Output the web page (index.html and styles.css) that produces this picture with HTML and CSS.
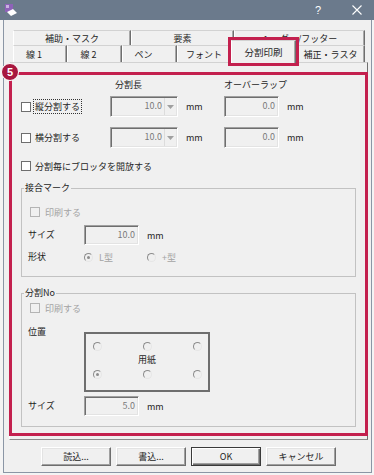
FILE: index.html
```html
<!DOCTYPE html>
<html>
<head>
    <meta charset="utf-8">
    <title>分割印刷</title>
    <link rel="stylesheet" href="styles.css">
</head>
<body>
    <div class="window">
        <div class="titlebar">
            <svg class="app-icon" viewBox="0 0 12 13" width="12" height="13">
                <rect x="0" y="0" width="8" height="8" fill="#8e62b8"/>
                <rect x="1" y="1" width="3" height="3" fill="#c9b3e0"/>
                <polygon points="2,8 8,5 12,9 6,12" fill="#ffffff"/>
            </svg>
            <span class="title-help">?</span>
            <svg class="title-close" viewBox="0 0 10 10" width="10" height="10">
                <path d="M0.5 0.5 L9.5 9.5 M9.5 0.5 L0.5 9.5" stroke="#ffffff" stroke-width="1.1"/>
            </svg>
        </div>

        <div class="client">
            <!-- tab strip, two rows -->
            <div class="tabs">
                <div class="tab-row row-back">
                    <div class="tab tab-mask">補助・マスク</div>
                    <div class="tab tab-elem">要素</div>
                    <div class="tab tab-header">ヘッダー/フッター</div>
                </div>
                <div class="tab-row row-front">
                    <div class="tab tab-line1 shift">線 1</div>
                    <div class="tab tab-line2 shift">線 2</div>
                    <div class="tab tab-pen shift">ペン</div>
                    <div class="tab tab-font">フォント</div>
                    <div class="tab tab-split active">分割印刷</div>
                    <div class="tab tab-raster">補正・ラスタ</div>
                </div>
            </div>

            <div class="panel">
                <div class="highlight">
                    <span class="badge">5</span>

                    <div class="split-row split-head">
                        <span></span>
                        <span class="head-len">分割長</span>
                        <span></span>
                        <span class="head-over">オーバーラップ</span>
                    </div>

                    <div class="split-row split-line first">
                        <label class="check">
                            <span class="box"></span>
                            <span class="focus">縦分割する</span>
                        </label>
                        <div class="combo">
                            <span class="value">10.0</span>
                            <span class="drop">
                                <svg viewBox="0 0 7 4" width="7" height="4"><polygon points="0,0 7,0 3.5,4" fill="#a0a0a0"/></svg>
                            </span>
                        </div>
                        <span class="unit">mm</span>
                        <div class="field"><span class="value">0.0</span></div>
                        <span class="unit">mm</span>
                    </div>

                    <div class="split-row split-line second">
                        <label class="check">
                            <span class="box"></span>
                            <span class="plain">横分割する</span>
                        </label>
                        <div class="combo">
                            <span class="value">10.0</span>
                            <span class="drop">
                                <svg viewBox="0 0 7 4" width="7" height="4"><polygon points="0,0 7,0 3.5,4" fill="#a0a0a0"/></svg>
                            </span>
                        </div>
                        <span class="unit">mm</span>
                        <div class="field"><span class="value">0.0</span></div>
                        <span class="unit">mm</span>
                    </div>

                    <label class="check open-row">
                        <span class="box"></span>
                        <span class="plain">分割毎にブロッタを開放する</span>
                    </label>

                    <!-- joint marks -->
                    <fieldset class="group group-joint">
                        <legend>接合マーク</legend>
                        <label class="check disabled">
                            <span class="box"></span>
                            <span class="plain">印刷する</span>
                        </label>
                        <div class="field-row size-row">
                            <span class="row-label">サイズ</span>
                            <div class="field small"><span class="value">10.0</span></div>
                            <span class="unit">mm</span>
                        </div>
                        <div class="field-row shape-row">
                            <span class="row-label">形状</span>
                            <span class="radio"><span class="dot on"></span>L型</span>
                            <span class="radio"><span class="dot"></span>+型</span>
                        </div>
                    </fieldset>

                    <!-- page numbers -->
                    <fieldset class="group group-no">
                        <legend>分割No</legend>
                        <label class="check disabled">
                            <span class="box"></span>
                            <span class="plain">印刷する</span>
                        </label>
                        <div class="pos-row">
                            <span class="row-label">位置</span>
                            <div class="paper-box">
                                <span class="dot"></span>
                                <span class="dot"></span>
                                <span class="dot"></span>
                                <span class="paper-label">用紙</span>
                                <span class="dot on"></span>
                                <span class="dot"></span>
                                <span class="dot"></span>
                            </div>
                        </div>
                        <div class="field-row size-row2">
                            <span class="row-label">サイズ</span>
                            <div class="field small"><span class="value">5.0</span></div>
                            <span class="unit">mm</span>
                        </div>
                    </fieldset>
                </div>
            </div>

            <div class="buttons">
                <button type="button" class="btn">読込...</button>
                <button type="button" class="btn">書込...</button>
                <button type="button" class="btn default">OK</button>
                <button type="button" class="btn">キャンセル</button>
            </div>
        </div>
    </div>
</body>
</html>
```

FILE: styles.css
```css
/* General page */
* {
    box-sizing: border-box;
}

body {
    margin: 0;
    width: 374px;
    height: 475px;
    overflow: hidden;
    background-color: #f4f4f4;
    font-family: "Noto Sans CJK JP", sans-serif;
    font-size: 9px;
    color: #1e1e1e;
}

/* Title bar */
.titlebar {
    height: 20px;
    background-color: #6b7a8c;
    display: flex;
    align-items: center;
    padding-left: 5px;
}

.app-icon {
    display: block;
}

.title-help {
    margin-left: auto;
    width: 16px;
    text-align: center;
    color: #fff;
    font-family: "Liberation Sans", sans-serif;
    font-size: 11px;
}

.title-close {
    display: block;
    margin-left: 26px;
    margin-right: 12px;
}

/* Dialog client area */
.client {
    margin: 0 2px 0 3px;
    height: 453px;
    border: 1px solid #8b96a5;
    border-top: none;
    background-color: #f0f0f0;
    padding-top: 10px;
}

/* Tabs */
.tabs {
    margin-left: 9px;
}

.tab-row {
    display: flex;
}

.row-back {
    height: 15px;
}

.row-front {
    height: 17px;
    align-items: flex-end;
}

.tab {
    height: 100%;
    display: flex;
    align-items: center;
    justify-content: center;
    white-space: nowrap;
    background-color: #f0f0f0;
    border-top: 1px solid #d2d2d2;
    border-left: 1px solid #fff;
    border-right: 1px solid #6f6f6f;
    box-shadow: inset -1px 0 0 #a8a8a8;
}

.tab.shift {
    padding-right: 12px;
}

.tab-mask { width: 118px; }
.tab-elem { width: 103px; }
.tab-header { width: 131px; }
.tab-line1 { width: 54px; }
.tab-line2 { width: 55px; }
.tab-pen { width: 55px; }
.tab-font { width: 54px; }
.tab-split { width: 65px; }
.tab-raster { width: 69px; }

.tab.active {
    position: relative;
    z-index: 2;
    height: 23px;
    margin-bottom: -1px;
    font-size: 9.5px;
    outline: 3px solid #c3204e;
}

/* Tab page */
.panel {
    margin-left: 5px;
    width: 359px;
    height: 378px;
    border: 1px solid;
    border-color: #d2d2d2 #6f6f6f #8a8a8a #fff;
    background-color: #f0f0f0;
    padding-top: 9px;
}

.highlight {
    position: relative;
    margin-left: -1px;
    width: 359px;
    height: 364px;
    border: 3px solid #c3204e;
    padding: 3px 9px 0 9px;
}

.badge {
    position: absolute;
    left: -11px;
    top: -12px;
    width: 18px;
    height: 18px;
    border-radius: 50%;
    border: 1px solid #fff;
    background-color: #a8173f;
    color: #fff;
    font-family: "Liberation Sans", sans-serif;
    font-weight: bold;
    font-size: 11px;
    line-height: 16px;
    text-align: center;
}

/* Split length rows */
.split-row {
    display: grid;
    grid-template-columns: 89px 68px 46px 55px auto;
    align-items: center;
}

.split-head {
    height: 14px;
    line-height: 14px;
}

.head-len {
    padding-left: 5px;
}

.head-over {
    white-space: nowrap;
}

.split-line {
    height: 21px;
}

.split-line.first {
    margin-top: 4px;
}

.split-line.second {
    margin-top: 10px;
}

.unit {
    padding-left: 8px;
}

/* Checkboxes */
.check {
    display: flex;
    align-items: center;
    height: 14px;
    line-height: 13px;
}

.check .box {
    width: 10px;
    height: 10px;
    border: 1px solid #6e6e6e;
    background-color: #fff;
    margin-right: 3px;
    flex-shrink: 0;
}

.check .focus {
    outline: 1px dotted #333;
    padding: 0 1px;
}

.check .plain {
    padding-left: 1px;
}

.check.disabled {
    color: #a3a3a3;
}

.check.disabled .box {
    margin-left: 2px;
    margin-right: 4px;
    border-color: #b4b4b4;
    background-color: #f0f0f0;
}

.open-row {
    margin-top: 11px;
}

/* Sunken inputs */
.combo,
.field {
    display: flex;
    height: 21px;
    border: 1px solid;
    border-color: #a0a0a0 #fff #fff #a0a0a0;
    box-shadow: inset 1px 1px 0 #6e6e6e, inset -1px -1px 0 #e3e3e3;
    background-color: #f0f0f0;
}

.value {
    flex: 1;
    text-align: right;
    color: #7a7a7a;
    padding: 2px 3px 0 0;
    line-height: 14px;
}

.combo .value {
    padding-right: 2px;
}

.drop {
    width: 12px;
    margin: 1px 1px 1px 0;
    border-left: 1px solid #dcdcdc;
    display: flex;
    align-items: center;
    justify-content: center;
}

.field.small {
    width: 55px;
    height: 20px;
}

/* Group boxes */
.group {
    margin: 8px 0 0 0;
    padding: 10px 0 12px 6px;
    border: 1px solid #c2c2c2;
    min-width: 0;
}

.group legend {
    margin-left: -4px;
    padding: 0 1px;
    line-height: 14px;
}

.group-no {
    margin-top: 9px;
    padding-top: 1px;
    padding-bottom: 10px;
}

.field-row {
    display: flex;
    align-items: center;
}

.row-label {
    width: 56px;
    flex-shrink: 0;
    line-height: 14px;
}

.size-row {
    height: 20px;
    margin-top: 6px;
}

.shape-row {
    height: 14px;
    margin-top: 5px;
}

.size-row2 {
    height: 20px;
    margin-top: 4px;
}

/* Radio buttons */
.radio {
    display: flex;
    align-items: center;
    width: 63px;
    color: #a3a3a3;
}

.radio .dot {
    margin-right: 6px;
}

.dot {
    position: relative;
    width: 9px;
    height: 9px;
    border-radius: 50%;
    border: 1px solid;
    border-color: #8c8c8c #e6e6e6 #e6e6e6 #8c8c8c;
    background-color: #f0f0f0;
}

.dot.on::after {
    content: "";
    position: absolute;
    left: 2px;
    top: 2px;
    width: 3px;
    height: 3px;
    border-radius: 50%;
    background-color: #8c8c8c;
}

/* Position picker */
.pos-row {
    display: flex;
    align-items: flex-start;
    margin-top: 10px;
}

.paper-box {
    margin-top: 7px;
    width: 126px;
    height: 60px;
    border: 2px solid #6e6e6e;
    padding-top: 7px;
    display: grid;
    grid-template-columns: repeat(3, 22px);
    grid-template-rows: 10px 18px 10px;
    justify-content: space-between;
    justify-items: center;
    align-items: center;
}

.paper-label {
    grid-column: 1 / -1;
    text-align: center;
    line-height: 14px;
}

/* Bottom buttons */
.buttons {
    display: flex;
    gap: 5px;
    padding-left: 37px;
    margin-top: 7px;
}

.btn {
    width: 70px;
    height: 19px;
    padding: 0;
    font-family: "Noto Sans CJK JP", sans-serif;
    font-size: 9px;
    color: #1e1e1e;
    background-color: #f0f0f0;
    border: 1px solid;
    border-color: #fff #6e6e6e #6e6e6e #fff;
    box-shadow: inset -1px -1px 0 #a0a0a0, inset 1px 1px 0 #e3e3e3;
}

.btn.default {
    border-color: #3a3a3a;
    box-shadow: inset 1px 1px 0 #fff, inset -1px -1px 0 #6e6e6e, inset -2px -2px 0 #a0a0a0;
}
```
